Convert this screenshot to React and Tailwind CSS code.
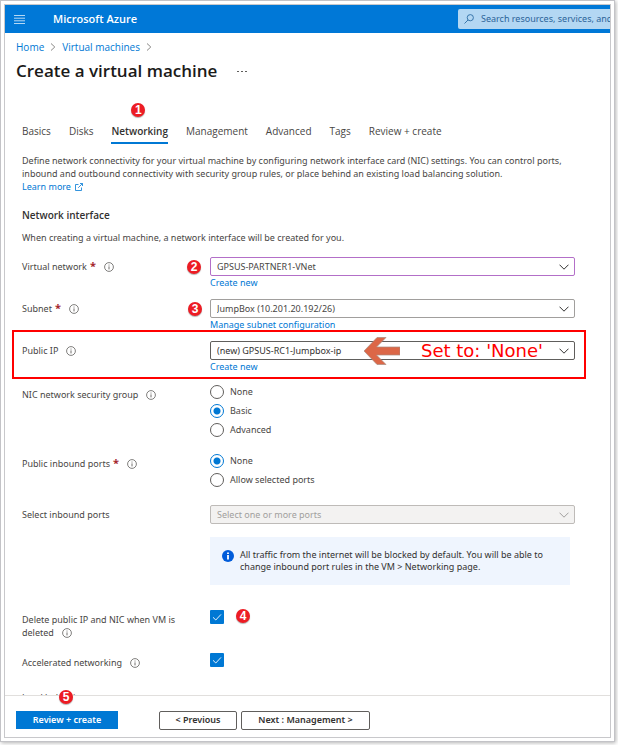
import { useId } from 'react'

const TABS = ['Basics', 'Disks', 'Networking', 'Management', 'Advanced', 'Tags', 'Review + create']

function Badge({ children, className }) {
  return (
    <span
      className={`absolute flex h-[14px] w-[14px] items-center justify-center rounded-full bg-[#ed1c24] font-['Liberation_Sans',sans-serif] text-[12px] leading-none font-bold text-white shadow-[0_1px_1px_rgba(0,0,0,0.3)] ${className}`}
    >
      {children}
    </span>
  )
}

function InfoIcon() {
  return (
    <svg viewBox="0 0 10 10" className="ml-2 inline-block h-[10px] w-[10px] shrink-0 align-[-2px]" fill="none" stroke="#605e5c">
      <circle cx="5" cy="5" r="4.4" strokeWidth="0.8" />
      <path d="M5 4.4v3M5 2.6v0.9" strokeWidth="0.9" />
    </svg>
  )
}

function Chevron({ className }) {
  return (
    <svg viewBox="0 0 10 6" className={className} fill="none" stroke="currentColor" strokeWidth="1">
      <path d="M0.5 0.7 5 5.2 9.5 0.7" />
    </svg>
  )
}

function Separator() {
  return (
    <svg viewBox="0 0 6 8" className="h-2 w-[6px]" fill="none" stroke="#8a8886" strokeWidth="1">
      <path d="M1 0.5 4.8 4 1 7.5" />
    </svg>
  )
}

function Row({ label, htmlFor, required, info = true, className = '', children }) {
  const Tag = htmlFor ? 'label' : 'div'
  return (
    <div className={`relative grid grid-cols-[188px_1fr] ${className}`}>
      <Tag htmlFor={htmlFor} className="pt-[3px] pr-6 leading-[13px]">
        {label}
        {required && <span className="ml-[3px] text-[11px] leading-none font-bold text-[#a4262c]">*</span>}
        {info && <InfoIcon />}
      </Tag>
      <div>{children}</div>
    </div>
  )
}

function Select({ id, value, disabled, className }) {
  return (
    <div className="relative">
      <select
        id={id}
        disabled={disabled}
        className={`block h-[19px] w-full appearance-none rounded-[2px] border px-[6px] text-[9px] leading-[17px] opacity-100 ${className}`}
      >
        <option>{value}</option>
      </select>
      <Chevron
        className={`pointer-events-none absolute top-[7px] right-[6px] h-[6px] w-[10px] ${disabled ? 'text-[#a19f9d]' : 'text-[#323130]'}`}
      />
    </div>
  )
}

function RadioGroup({ label, options, selected }) {
  const name = useId()
  return (
    <div role="radiogroup" aria-label={label} className="flex flex-col gap-[5px]">
      {options.map((option) => (
        <label key={option} className="flex h-[14px] items-center gap-[6px]">
          <input
            type="radio"
            name={name}
            defaultChecked={option === selected}
            className="h-[14px] w-[14px] appearance-none rounded-full border border-[#605e5c] bg-white checked:border-[#0078d4] checked:bg-[radial-gradient(circle,#0078d4_3px,transparent_4px)]"
          />
          {option}
        </label>
      ))}
    </div>
  )
}

function Checkbox({ id }) {
  return (
    <div className="relative h-[14px] w-[14px]">
      <input id={id} type="checkbox" defaultChecked className="block h-[14px] w-[14px] appearance-none rounded-[1px] bg-[#0078d4]" />
      <svg viewBox="0 0 14 14" className="pointer-events-none absolute inset-0" fill="none" stroke="#fff" strokeWidth="0.9">
        <path d="M3 7.3 5.8 10 11 4.4" />
      </svg>
    </div>
  )
}

function Link({ children, className = '' }) {
  return (
    <a href="#" className={`text-[#0078d4] hover:underline ${className}`}>
      {children}
    </a>
  )
}

export default function App() {
  return (
    <div className="h-screen bg-white pr-[3px] pb-[3px] font-['Noto_Sans','Open_Sans',sans-serif] text-[9px] text-[#484644]">
      <div className="h-full border border-[#c3c3c7] p-[3px] shadow-[1px_1px_4px_rgba(0,0,0,0.3)]">
        <div className="flex h-full flex-col overflow-hidden border border-[#c8c8cb]">
          <header className="flex h-7 shrink-0 items-center justify-between overflow-hidden bg-[#0078d7]">
            <div className="flex items-center gap-7 pl-[9px]">
              <button aria-label="Show portal menu">
                <svg viewBox="0 0 11 9" className="h-[9px] w-[11px]" stroke="#b5d8f4" strokeWidth="1">
                  <path d="M0 0.5h11M0 3.2h11M0 5.8h11M0 8.5h11" />
                </svg>
              </button>
              <span className="font-['Open_Sans',sans-serif] text-[11px] font-semibold text-white">Microsoft Azure</span>
            </div>
            <div className="flex h-5 w-[152px] items-center gap-[7px] rounded-l-[2px] bg-[#b3d7f3] pl-[6px]">
              <svg viewBox="0 0 10 10" className="h-[10px] w-[10px] shrink-0" fill="none" stroke="#2b6ca3" strokeWidth="0.9">
                <circle cx="6.3" cy="3.7" r="3.1" />
                <path d="M4 6 0.5 9.5" />
              </svg>
              <input
                aria-label="Search"
                placeholder="Search resources, services, and docs"
                className="min-w-0 flex-1 bg-transparent text-[9px] placeholder-[#2b6499] outline-none"
              />
            </div>
          </header>

          <main className="min-h-0 flex-1 overflow-hidden">
            <nav className="flex items-center gap-[6px] pt-[6px] pl-[11px] font-['Open_Sans',sans-serif] text-[10px] leading-4">
              <Link>Home</Link>
              <Separator />
              <Link>Virtual machines</Link>
              <Separator />
            </nav>
            <div className="flex items-center gap-5 pl-[11px]">
              <h1 className="font-['Open_Sans',sans-serif] text-[17px] leading-8 font-semibold text-[#1b1a19]">Create a virtual machine</h1>
              <button aria-label="More" className="flex gap-[2px]">
                <span className="h-px w-[2px] bg-[#605e5c]" />
                <span className="h-px w-[2px] bg-[#605e5c]" />
                <span className="h-px w-[2px] bg-[#605e5c]" />
              </button>
            </div>

            <div className="pr-[35px] pl-[17px]">
              <div role="tablist" className="mt-9 flex gap-[18px] font-['Open_Sans',sans-serif] text-[10px]">
                {TABS.map((tab) => (
                  <button
                    key={tab}
                    role="tab"
                    aria-selected={tab === 'Networking'}
                    className={`relative h-[21px] border-b-2 pb-1 leading-4 whitespace-nowrap ${
                      tab === 'Networking' ? 'border-[#0078d4] font-semibold text-[#323130]' : 'border-transparent'
                    }`}
                  >
                    {tab}
                    {tab === 'Networking' && <Badge className="-top-5 left-5">1</Badge>}
                  </button>
                ))}
              </div>

              <p className="mt-[10px] leading-[13px]">
                Define network connectivity for your virtual machine by configuring network interface card (NIC) settings. You can control
                ports, inbound and outbound connectivity with security group rules, or place behind an existing load balancing solution.
              </p>
              <Link className="flex items-center gap-1 leading-[13px]">
                Learn more
                <svg viewBox="0 0 8 8" className="h-2 w-2" fill="none" stroke="#0078d4" strokeWidth="0.8">
                  <path d="M3.5 1.5H0.5v6h6v-3M3.2 4.8 7.4 0.6M5 0.5h2.5V3" />
                </svg>
              </Link>

              <h2 className="mt-[14px] font-['Open_Sans',sans-serif] text-[10px] leading-4 font-semibold text-[#323130]">Network interface</h2>
              <p className="mt-2 leading-[13px]">When creating a virtual machine, a network interface will be created for you.</p>

              <Row label="Virtual network" htmlFor="vnet" required className="mt-[13px] h-[42px]">
                <Select id="vnet" value="GPSUS-PARTNER1-VNet" className="border-[#b36fc8]" />
                <Link className="block leading-[14px]">Create new</Link>
                <Badge className="top-[3px] left-[165px]">2</Badge>
              </Row>
              <Row label="Subnet" htmlFor="subnet" required className="h-[42px]">
                <Select id="subnet" value="JumpBox (10.201.20.192/26)" className="border-[#a19f9d]" />
                <Link className="block leading-[14px]">Manage subnet configuration</Link>
                <Badge className="top-[3px] left-[166px]">3</Badge>
              </Row>
              <Row label="Public IP" htmlFor="public-ip" className="h-11">
                <Select id="public-ip" value="(new) GPSUS-RC1-Jumpbox-ip" className="border-[#605e5c] text-[#323130]" />
                <Link className="block leading-[14px]">Create new</Link>
                <div className="pointer-events-none absolute -top-[11px] -right-[11px] -left-[10px] h-[49px] border-2 border-[#f00]" />
                <div className="pointer-events-none absolute -top-1 left-[342px] flex h-7 items-center gap-[21px]">
                  <svg viewBox="0 0 36 28" className="h-7 w-9">
                    <path d="M0 14 13 0.5H22L12.5 10H36V18H12.5L22 27.5H13Z" fill="#dc6747" stroke="#a98b80" strokeWidth="0.7" />
                  </svg>
                  <span className="font-['DejaVu_Sans',sans-serif] text-[18px] leading-7 whitespace-nowrap text-[#f00]">Set to: 'None'</span>
                </div>
              </Row>

              <Row label="NIC network security group" className="h-[69px]">
                <RadioGroup label="NIC network security group" options={['None', 'Basic', 'Advanced']} selected="Basic" />
              </Row>
              <Row label="Public inbound ports" required className="h-[51px]">
                <RadioGroup label="Public inbound ports" options={['None', 'Allow selected ports']} selected="None" />
              </Row>
              <Row label="Select inbound ports" htmlFor="inbound" info={false}>
                <Select id="inbound" value="Select one or more ports" disabled className="border-[#bebbb8] bg-[#f3f2f1] text-[#a19f9d]" />
                <div className="mt-[13px] mr-[5px] flex h-12 gap-[6px] bg-[#eff5fe] pt-3 pr-5 pl-3">
                  <svg viewBox="0 0 12 12" className="mt-px h-3 w-3 shrink-0">
                    <circle cx="6" cy="6" r="6" fill="#015cda" />
                    <path d="M5.1 5h1.8v4.6H5.1zM5.1 2.4h1.8v1.6H5.1z" fill="#fff" />
                  </svg>
                  <p className="leading-3 text-[#323130]">
                    All traffic from the internet will be blocked by default. You will be able to change inbound port rules in the VM &gt;
                    Networking page.
                  </p>
                </div>
              </Row>

              <Row label="Delete public IP and NIC when VM is deleted" htmlFor="delete-ip" className="mt-[25px] h-[43px]">
                <Checkbox id="delete-ip" />
                <Badge className="-top-px left-[214px]">4</Badge>
              </Row>
              <Row label="Accelerated networking" htmlFor="accelerated" className="h-[35px]">
                <Checkbox id="accelerated" />
              </Row>
              <Row label="Load balancing" info={false}>
                {null}
              </Row>
            </div>
          </main>

          <footer className="relative flex h-[42px] shrink-0 items-center border-t border-[#e1dfdd] pt-[7px] pl-[11px] font-semibold text-[#323130]">
            <button className="h-[18px] w-[102px] bg-[#0078d4] text-white">Review + create</button>
            <button className="ml-[41px] h-[19px] w-[78px] rounded-[2px] border border-[#605e5c]">&lt; Previous</button>
            <button className="ml-1 h-[19px] w-[129px] rounded-[2px] border border-[#605e5c]">Next : Management &gt;</button>
            <Badge className="-top-[6px] left-[54px]">5</Badge>
          </footer>
        </div>
      </div>
    </div>
  )
}
